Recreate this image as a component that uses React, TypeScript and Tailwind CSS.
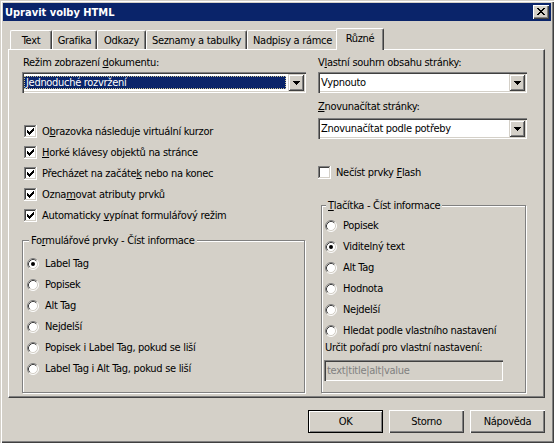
import React from 'react';

function CheckBox({ checked }: { checked?: boolean }) {
  return (
    <svg width="13" height="13" viewBox="0 0 13 13" shapeRendering="crispEdges" className="block shrink-0">
      <rect width="13" height="13" fill="#ffffff" />
      <rect x="0" y="0" width="12" height="1" fill="#808080" />
      <rect x="0" y="0" width="1" height="12" fill="#808080" />
      <rect x="1" y="1" width="10" height="1" fill="#404040" />
      <rect x="1" y="1" width="1" height="10" fill="#404040" />
      <rect x="1" y="11" width="11" height="1" fill="#d4d0c8" />
      <rect x="11" y="1" width="1" height="11" fill="#d4d0c8" />
      {checked && (
        <g fill="#000000">
          <rect x="9" y="3" width="1" height="1" />
          <rect x="8" y="4" width="2" height="1" />
          <rect x="3" y="5" width="1" height="1" />
          <rect x="7" y="5" width="3" height="1" />
          <rect x="3" y="6" width="2" height="1" />
          <rect x="6" y="6" width="3" height="1" />
          <rect x="3" y="7" width="5" height="1" />
          <rect x="4" y="8" width="3" height="1" />
          <rect x="5" y="9" width="1" height="1" />
        </g>
      )}
    </svg>
  );
}

function Radio({ checked }: { checked?: boolean }) {
  return (
    <svg width="12" height="12" viewBox="0 0 12 12" className="block shrink-0">
      <circle cx="6" cy="6" r="5" fill="#ffffff" />
      <path d="M2.11 9.89 A5.5 5.5 0 0 1 9.89 2.11" stroke="#808080" fill="none" />
      <path d="M9.89 2.11 A5.5 5.5 0 0 1 2.11 9.89" stroke="#ffffff" fill="none" />
      <path d="M2.82 9.18 A4.5 4.5 0 0 1 9.18 2.82" stroke="#404040" fill="none" />
      <path d="M9.18 2.82 A4.5 4.5 0 0 1 2.82 9.18" stroke="#d4d0c8" fill="none" />
      {checked && <circle cx="6" cy="6" r="2" fill="#000000" />}
    </svg>
  );
}

function DropBtn() {
  return (
    <div className="flex h-[17px] w-[16px] shrink-0 items-center justify-center bg-[#d4d0c8] shadow-[inset_1px_1px_0_#d4d0c8,inset_-1px_-1px_0_#404040,inset_2px_2px_0_#ffffff,inset_-2px_-2px_0_#808080]">
      <svg width="7" height="4" viewBox="0 0 7 4" shapeRendering="crispEdges" className="block">
        <rect x="0" y="0" width="7" height="1" fill="#000" />
        <rect x="1" y="1" width="5" height="1" fill="#000" />
        <rect x="2" y="2" width="3" height="1" fill="#000" />
        <rect x="3" y="3" width="1" height="1" fill="#000" />
      </svg>
    </div>
  );
}

function Combo({ text, selected }: { text: string; selected?: boolean }) {
  return (
    <div className="flex h-[21px] w-full bg-white p-[2px] shadow-[inset_1px_1px_0_#808080,inset_2px_2px_0_#404040,inset_-1px_-1px_0_#ffffff,inset_-2px_-2px_0_#d4d0c8]">
      <div className="min-w-0 flex-1 py-[2px] pr-[2px]">
        {selected ? (
          <div className="h-full whitespace-nowrap bg-[#0a246a] pl-[2px] leading-[13px] text-white outline-1 -outline-offset-1 outline-dotted outline-[#c8c090]">
            {text}
          </div>
        ) : (
          <div className="h-full whitespace-nowrap pl-[1px] leading-[13px]">{text}</div>
        )}
      </div>
      <DropBtn />
    </div>
  );
}

function CheckRow({ checked, children }: { checked?: boolean; children: React.ReactNode }) {
  return (
    <div className="flex h-[21px] items-center gap-[5px] whitespace-nowrap">
      <CheckBox checked={checked} />
      <span className="leading-[13px]">{children}</span>
    </div>
  );
}

function RadioRow({ checked, children }: { checked?: boolean; children: React.ReactNode }) {
  return (
    <div className="flex h-[21px] items-center gap-[6px] whitespace-nowrap">
      <Radio checked={checked} />
      <span className="leading-[13px]">{children}</span>
    </div>
  );
}

function PushButton({ label, def }: { label: string; def?: boolean }) {
  if (def) {
    return (
      <div className="flex h-[23px] w-[75px] items-center justify-center border border-black bg-[#d4d0c8] shadow-[inset_1px_1px_0_#ffffff,inset_-1px_-1px_0_#808080]">
        {label}
      </div>
    );
  }
  return (
    <div className="flex h-[23px] w-[75px] items-center justify-center bg-[#d4d0c8] shadow-[inset_1px_1px_0_#ffffff,inset_-1px_-1px_0_#404040,inset_-2px_-2px_0_#808080]">
      {label}
    </div>
  );
}

const tabs = [
  { label: 'Text', w: 'w-[42px]' },
  { label: 'Grafika', w: 'w-[45px]' },
  { label: 'Odkazy', w: 'w-[49px]' },
  { label: 'Seznamy a tabulky', w: 'w-[101px]' },
  { label: 'Nadpisy a rámce', w: 'w-[91px]' },
];

export default function App() {
  return (
    <div className="h-[443px] w-[554px] overflow-hidden bg-[#d4d0c8] p-[3px] font-['DejaVu_Sans_Condensed','Liberation_Sans',sans-serif] text-[11px] leading-[13px] tracking-[-0.3px] text-black shadow-[inset_1px_1px_0_#d4d0c8,inset_2px_2px_0_#ffffff,inset_-1px_-1px_0_#404040,inset_-2px_-2px_0_#808080]">
      {/* Title bar */}
      <div className="flex h-[18px] items-center justify-between bg-[#0a246a] pl-[2px] pr-[2px]">
        <span className="font-bold tracking-normal text-white">Upravit volby HTML</span>
        <div className="flex h-[14px] w-[16px] items-start justify-start bg-[#d4d0c8] pl-[4px] pt-[3px] shadow-[inset_1px_1px_0_#ffffff,inset_-1px_-1px_0_#404040,inset_-2px_-2px_0_#808080]">
          <svg width="8" height="7" viewBox="0 0 8 7" shapeRendering="crispEdges" className="block">
            <g fill="#000">
              <rect x="0" y="0" width="2" height="1" />
              <rect x="6" y="0" width="2" height="1" />
              <rect x="1" y="1" width="2" height="1" />
              <rect x="5" y="1" width="2" height="1" />
              <rect x="2" y="2" width="4" height="1" />
              <rect x="3" y="3" width="2" height="1" />
              <rect x="2" y="4" width="4" height="1" />
              <rect x="1" y="5" width="2" height="1" />
              <rect x="5" y="5" width="2" height="1" />
              <rect x="0" y="6" width="2" height="1" />
              <rect x="6" y="6" width="2" height="1" />
            </g>
          </svg>
        </div>
      </div>

      {/* Tabs */}
      <div className="ml-[7px] mt-[7px] flex h-[21px] items-end">
        {tabs.map((t) => (
          <div
            key={t.label}
            className={`${t.w} flex h-[19px] shrink-0 items-center justify-center whitespace-nowrap rounded-t-[2px] border-l border-r border-t border-l-white border-r-[#404040] border-t-white shadow-[inset_-1px_0_0_#808080]`}
          >
            {t.label}
          </div>
        ))}
        <div className="relative z-10 -mb-[1px] -ml-[2px] flex h-[22px] w-[48px] shrink-0 items-center justify-center whitespace-nowrap rounded-t-[2px] border-l border-r border-t border-l-white border-r-[#404040] border-t-white bg-[#d4d0c8] pb-[3px] shadow-[inset_-1px_0_0_#808080]">
          Různé
        </div>
      </div>

      {/* Panel */}
      <div className="ml-[5px] flex h-[349px] w-[537px] gap-[12px] border-b border-l border-r border-t border-b-[#404040] border-l-white border-r-[#404040] border-t-white pl-[13px] pt-[6px] shadow-[inset_-1px_-1px_0_#808080]">
        {/* Left column */}
        <div className="flex w-[284px] flex-col">
          <div className="h-[13px] pl-[1px]">
            Režim zobrazení <u>d</u>okumentu:
          </div>
          <div className="mt-[3px]">
            <Combo text="Jednoduché rozvržení" selected />
          </div>
          <div className="mt-[28px] flex flex-col pl-[2px]">
            <CheckRow checked>
              O<u>b</u>razovka následuje virtuální kurzor
            </CheckRow>
            <CheckRow checked>
              <u>H</u>orké klávesy objektů na stránce
            </CheckRow>
            <CheckRow checked>
              Přecházet na začáte<u>k</u> nebo na konec
            </CheckRow>
            <CheckRow checked>
              Ozna<u>m</u>ovat atributy prvků
            </CheckRow>
            <CheckRow checked>
              Automaticky <u>v</u>ypínat formulářový režim
            </CheckRow>
          </div>
          <div className="relative mt-[14px] h-[153px] w-[283px] border border-[#808080] pl-[4px] pt-[12px] shadow-[inset_1px_1px_0_#ffffff,1px_1px_0_#ffffff]">
            <span className="absolute left-[6px] top-[-7px] bg-[#d4d0c8] px-[2px] leading-[13px]">
              Fo<u>r</u>mulářové prvky - Číst informace
            </span>
            <RadioRow checked>Label Tag</RadioRow>
            <RadioRow>Popisek</RadioRow>
            <RadioRow>Alt Tag</RadioRow>
            <RadioRow>Nejdelší</RadioRow>
            <RadioRow>Popisek i Label Tag, pokud se liší</RadioRow>
            <RadioRow>Label Tag i Alt Tag, pokud se liší</RadioRow>
          </div>
        </div>

        {/* Right column */}
        <div className="flex w-[209px] flex-col">
          <div className="h-[13px]">
            V<u>l</u>astní souhrn obsahu stránky:
          </div>
          <div className="mt-[3px]">
            <Combo text="Vypnouto" />
          </div>
          <div className="mt-[7px] h-[13px]">
            <u>Z</u>novunačítat stránky:
          </div>
          <div className="mt-[5px]">
            <Combo text="Znovunačítat podle potřeby" />
          </div>
          <div className="mt-[23px]">
            <CheckRow>
              Nečíst prvky <u>F</u>lash
            </CheckRow>
          </div>
          <div className="relative ml-[3px] mt-[22px] h-[188px] w-[205px] border border-[#808080] pl-[3px] pt-[9px] shadow-[inset_1px_1px_0_#ffffff,1px_1px_0_#ffffff]">
            <span className="absolute left-[4px] top-[-7px] bg-[#d4d0c8] px-[2px] leading-[13px]">
              <u>T</u>lačítka - Číst informace
            </span>
            <RadioRow>Popisek</RadioRow>
            <RadioRow checked>Viditelný text</RadioRow>
            <RadioRow>Alt Tag</RadioRow>
            <RadioRow>Hodnota</RadioRow>
            <RadioRow>Nejdelší</RadioRow>
            <RadioRow>Hledat podle vlastního nastavení</RadioRow>
            <div className="h-[13px] whitespace-nowrap">Určit pořadí pro vlastní nastavení:</div>
            <div className="-ml-[1px] mt-[6px] flex h-[21px] w-[179px] items-center bg-[#d4d0c8] pl-[3px] text-[#808080] shadow-[inset_1px_1px_0_#808080,inset_2px_2px_0_#404040,inset_-1px_-1px_0_#ffffff,inset_-2px_-2px_0_#d4d0c8]">
              text|title|alt|value
            </div>
          </div>
        </div>
      </div>

      {/* Buttons */}
      <div className="mt-[12px] flex justify-end gap-[6px] pr-[6px]">
        <PushButton label="OK" def />
        <PushButton label="Storno" />
        <PushButton label="Nápověda" />
      </div>
    </div>
  );
}
